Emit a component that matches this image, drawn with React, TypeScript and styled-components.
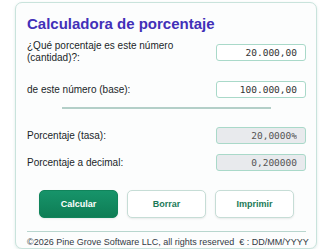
import styled, { createGlobalStyle } from "styled-components";

const GlobalStyle = createGlobalStyle`
  html, body {
    margin: 0;
    padding: 0;
    background: #ffffff;
  }
  body {
    font-family: "Liberation Sans", Arial, sans-serif;
  }
`;

const Card = styled.div`
  box-sizing: border-box;
  width: 302px;
  height: 247px;
  margin: 2px 0 0 15px;
  padding: 10px 10px 0 11px;
  background: #fcfdfd;
  border: 1px solid #c9e3dc;
  border-radius: 7px;
  box-shadow: 0 1px 3px rgba(120, 170, 160, 0.25);
  display: flex;
  flex-direction: column;
`;

const Title = styled.h1`
  margin: 0 0 6px;
  font-size: 15px;
  line-height: 21px;
  font-weight: 700;
  color: #4230b8;
`;

const Row = styled.div<{ $gap: number }>`
  display: flex;
  align-items: center;
  justify-content: space-between;
  margin-bottom: ${(p) => p.$gap}px;
`;

const Label = styled.label`
  width: 160px;
  font-size: 10px;
  line-height: 12px;
  color: #1a1f29;
`;

const Field = styled.input<{ $readonly?: boolean }>`
  box-sizing: border-box;
  width: 90px;
  height: 17px;
  padding: 0 8px;
  border: 1px solid #a9d9c9;
  border-radius: 3px;
  background: ${(p) => (p.$readonly ? "#e8eaed" : "#ffffff")};
  font-family: "DejaVu Sans Mono", "Liberation Mono", monospace;
  font-size: 9.5px;
  color: ${(p) => (p.$readonly ? "#555" : "#333")};
  text-align: right;
  outline: none;
`;

const Divider = styled.hr`
  width: 75%;
  margin: 0 auto 18px;
  border: none;
  border-top: 2px solid #b3cfc8;
`;

const Buttons = styled.div`
  display: flex;
  justify-content: center;
  gap: 9px;
  margin: 0 0 13px;
`;

const Button = styled.button<{ $primary?: boolean }>`
  box-sizing: border-box;
  width: 79px;
  height: 28px;
  border-radius: 5px;
  font-family: "Liberation Sans", Arial, sans-serif;
  font-size: 9px;
  font-weight: 700;
  cursor: pointer;
  border: 1px solid ${(p) => (p.$primary ? "#11845b" : "#c6ddd6")};
  background: ${(p) =>
    p.$primary ? "linear-gradient(#17946a, #0e7d55)" : "#ffffff"};
  color: ${(p) => (p.$primary ? "#ffffff" : "#1b7a57")};
  box-shadow: 0 1px 2px rgba(0, 0, 0, 0.08);
`;

const Footer = styled.div`
  border-top: 1px solid #b8d6ce;
  padding-top: 4px;
  font-size: 9px;
  line-height: 12px;
  color: #333a44;
  white-space: nowrap;
`;

const App = () => {
  return (
    <>
      <GlobalStyle />
      <Card>
        <Title>Calculadora de porcentaje</Title>
        <Row $gap={17}>
          <Label>¿Qué porcentaje es este número (cantidad)?:</Label>
          <Field defaultValue="20.000,00" />
        </Row>
        <Row $gap={9}>
          <Label>de este número (base):</Label>
          <Field defaultValue="100.000,00" />
        </Row>
        <Divider />
        <Row $gap={10}>
          <Label>Porcentaje (tasa):</Label>
          <Field $readonly readOnly value="20,0000%" />
        </Row>
        <Row $gap={19}>
          <Label>Porcentaje a decimal:</Label>
          <Field $readonly readOnly value="0,200000" />
        </Row>
        <Buttons>
          <Button $primary>Calcular</Button>
          <Button>Borrar</Button>
          <Button>Imprimir</Button>
        </Buttons>
        <Footer>©2026 Pine Grove Software LLC, all rights reserved &nbsp;€ : DD/MM/YYYY</Footer>
      </Card>
    </>
  );
};

export default App;
